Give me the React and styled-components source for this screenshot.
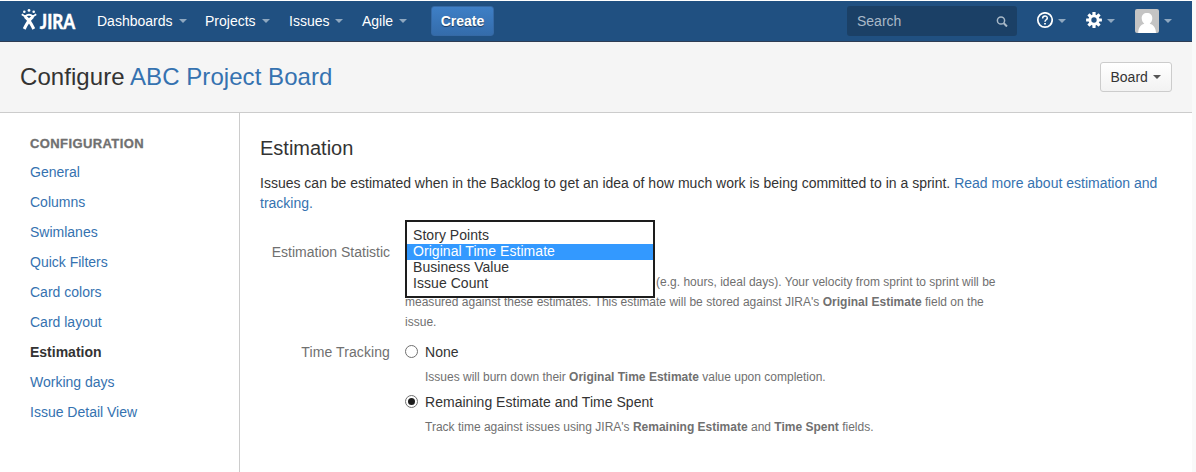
import React from "react";
import styled, { createGlobalStyle, css } from "styled-components";

const Global = createGlobalStyle`
  * { box-sizing: border-box; }
  html, body { margin: 0; padding: 0; background: #f9f9f9; }
  body { font-family: "Liberation Sans", Arial, sans-serif; font-size: 14px; line-height: 20px; color: #333; }
`;
const Page = styled.div`
  width: 1192px; height: 472px; padding-top: 1px; overflow: hidden;
  background: #fff; display: flex; flex-direction: column;
`;
const TopBar = styled.header`
  height: 41px; flex: none; background: #205081; border-bottom: 1px solid #2e3d54;
  display: flex; align-items: center; padding: 0 20px;
`;
const Logo = styled.svg`
  display: block; width: 60px; height: 40px; flex: none; margin-right: 17px; overflow: visible;
`;
const Caret = styled.span`
  display: block; flex: none; width: 0; height: 0;
  border: 4px solid transparent; border-bottom-width: 0;
  border-top-color: ${(p) => p.$color || "#8fa8c0"};
`;
const NavItem = styled.a`
  display: flex; align-items: center; gap: 6px; color: #fff;
  width: ${(p) => p.$width}px;
`;
const CreateButton = styled.button`
  width: 63px; height: 30px; padding: 0; border: 1px solid #3569a5; border-radius: 3px;
  background: linear-gradient(#3e7fc6, #346cab); color: #fff;
  font: bold 14px "Liberation Sans", Arial, sans-serif; text-shadow: 0 1px 1px rgba(0,0,0,.5);
`;
const Tools = styled.div`
  margin-left: auto; display: flex; align-items: center;
`;
const Search = styled.div`
  width: 170px; height: 30px; border-radius: 3px; background: #1b4066; color: #a9b9c8;
  display: flex; align-items: center; justify-content: space-between;
  padding: 0 9px 0 10px; margin-right: 19px;
`;
const Tool = styled.div`
  display: flex; align-items: center; gap: 5px; margin-right: ${(p) => p.$after || 0}px;
  svg { display: block; }
`;
const PageHead = styled.div`
  height: 71px; flex: none; background: #f5f5f5; border-bottom: 1px solid #ccc;
  display: flex; align-items: center; justify-content: space-between; padding: 0 20px;
`;
const Title = styled.h1`
  margin: 0; font-size: 24px; font-weight: normal; line-height: 30px; letter-spacing: 0.06px;
`;
const Link = styled.a`
  color: #3572b0;
`;
const BoardButton = styled.button`
  width: 72px; height: 30px; border: 1px solid #ccc; border-radius: 3px; padding: 0 0 0 9.5px;
  background: linear-gradient(#fff, #f2f2f2); color: #333; font: 14px "Liberation Sans", Arial, sans-serif;
  display: flex; align-items: center; gap: 5px;
`;
const Body = styled.div`
  flex: 1; display: flex;
`;
const Sidebar = styled.nav`
  width: 240px; flex: none; border-right: 1px solid #ccc; padding: 21px 0 0 30px;
`;
const SideHeading = styled.h2`
  margin: 0; padding-bottom: 3px; font-size: 13px; line-height: 20px; color: #707070;
  letter-spacing: 0.4px; -webkit-text-stroke: 0.3px #707070;
`;
const SideLink = styled.a`
  display: block; height: 30px; line-height: 30px; color: #3572b0;
  ${(p) => p.$active && css`color: #333; font-weight: bold;`}
`;
const Content = styled.main`
  width: 920px; padding: 20px 0 0 20px;
`;
const SectionTitle = styled.h2`
  margin: 0; font-size: 20px; font-weight: normal; line-height: 30px;
`;
const Intro = styled.p`
  margin: 10px 0 0;
`;
const Field = styled.div`
  display: grid; grid-template-columns: 130px 600px; column-gap: 15px;
  margin-top: ${(p) => p.$top}px;
`;
const Label = styled.div`
  text-align: right; color: #707070; letter-spacing: ${(p) => p.$track || 0}px;
`;
const Control = styled.div`
  position: relative;
`;
const Menu = styled.ul`
  position: absolute; left: 0; top: -22px; width: 250px; height: 78px; margin: 0;
  padding: 6px 0 4px; list-style: none; background: #fff; border: 2px solid #1d1d1d;
`;
const Option = styled.li`
  height: 16px; line-height: 15px; padding-left: 6px; letter-spacing: 0.05px;
  ${(p) => p.$selected && css`background: #3399ff; color: #fff;`}
`;
const Hint = styled.p`
  margin: 0; font-size: 12px; line-height: 20px; color: #707070;
  padding-top: ${(p) => p.$top || 0}px; padding-left: ${(p) => p.$left || 0}px;
  text-indent: ${(p) => p.$indent || 0}px; letter-spacing: ${(p) => p.$track || 0}px;
`;
const Choice = styled.label`
  display: flex; align-items: center; height: 20px; gap: 7px; margin-top: ${(p) => p.$top || 0}px;
  letter-spacing: 0.03px;
`;
const Radio = styled.span`
  width: 13px; height: 13px; border: 1px solid #707070; border-radius: 50%; background: #fff;
  display: flex; align-items: center; justify-content: center; margin-bottom: 1px;
  ${(p) => p.$on && css`&::after { content: ""; width: 7px; height: 7px; border-radius: 50%; background: #1d1d1d; }`}
`;

const SIDE = ["General", "Columns", "Swimlanes", "Quick Filters", "Card colors", "Card layout", "Estimation", "Working days", "Issue Detail View"];
const OPTIONS = ["Story Points", "Original Time Estimate", "Business Value", "Issue Count"];
const NAV = [["Dashboards", 108], ["Projects", 84], ["Issues", 73], ["Agile", 69]];

export default function App() {
  return (
    <>
      <Global />
      <Page>
        <TopBar>
          <Logo viewBox="20 1 60 40" aria-label="JIRA">
            <g fill="#fff">
              <circle cx="24.3" cy="11.8" r="1.3" />
              <circle cx="29" cy="10.4" r="1.4" />
              <circle cx="33.7" cy="11.8" r="1.3" />
            </g>
            <g fill="none" stroke="#fff">
              <path d="M21.8 14.2L25 16.4Q29 13.2 33 16.4L36.2 14.2" strokeWidth="1.8" />
              <path d="M25 16.5C28.5 19.5 31.5 24 33.8 29" strokeWidth="3" />
              <path d="M33 16.5C29.500 19.5 26.500 24 24.2 29" strokeWidth="3" />
            </g>
            <text x="39.8" y="28.6" fill="#fff" stroke="#fff" strokeWidth=".3" fontFamily="Lato" fontWeight="900" fontSize="20" textLength="35.5" lengthAdjust="spacingAndGlyphs">JIRA</text>
          </Logo>
          {NAV.map(([t, w]) => (
            <NavItem key={t} $width={w}>{t}<Caret /></NavItem>
          ))}
          <CreateButton>Create</CreateButton>
          <Tools>
            <Search>
              Search
              <svg width="12" height="12" viewBox="0 0 12 12" fill="none" stroke="#a9b9c8">
                <circle cx="5" cy="5.5" r="3.6" strokeWidth="1.5" />
                <path d="M7.8 8.3L11 11.5" strokeWidth="2" />
              </svg>
            </Search>
            <Tool $after={20}>
              <svg width="17" height="18" viewBox="0 0 17 18" fill="none" stroke="#fff">
                <circle cx="9" cy="8" r="7.2" strokeWidth="1.7" />
                <path d="M6.6 6.4C6.7 3.2 11.4 3.3 11.3 6.100C11.2 7.8 9 7.800 9 9.7" strokeWidth="1.5" />
                <path d="M9 10.9V12.6" strokeWidth="1.8" />
              </svg>
              <Caret />
            </Tool>
            <Tool $after={20}>
              <svg width="16" height="18" viewBox="-8 -8 16 18">
                <g fill="#fff">
                  {[0, 45, 90, 135].map((a) => (
                    <rect key={a} x="-1.6" y="-7.9" width="3.2" height="15.8" rx=".4" transform={`rotate(${a})`} />
                  ))}
                  <circle r="5.5" />
                </g>
                <circle r="2.7" fill="#205081" />
              </svg>
              <Caret />
            </Tool>
            <Tool>
              <svg width="24" height="24" viewBox="0 0 24 24">
                <rect width="24" height="24" rx="2" fill="#c4c4c4" />
                <path d="M12 4C8.8 4 6.5 6 6.7 9.5C6.900 12 8 13.7 9.3 14.8C5.5 15.8 3.5 18.5 3.2 24H21C20.7 18.5 18.5 15.8 14.7 14.8C16 13.7 17.1 12 17.3 9.5C17.5 6 15.2 4 12 4Z" fill="#fff" />
              </svg>
              <Caret />
            </Tool>
          </Tools>
        </TopBar>
        <PageHead>
          <Title>Configure <Link>ABC Project Board</Link></Title>
          <BoardButton>Board<Caret $color="#555" /></BoardButton>
        </PageHead>
        <Body>
          <Sidebar>
            <SideHeading>CONFIGURATION</SideHeading>
            {SIDE.map((t) => <SideLink key={t} $active={t === "Estimation"}>{t}</SideLink>)}
          </Sidebar>
          <Content>
            <SectionTitle>Estimation</SectionTitle>
            <Intro>
              Issues can be estimated when in the Backlog to get an idea of how much work is being committed to in a sprint. <Link>Read more about estimation and tracking.</Link>
            </Intro>
            <Field $top={29}>
              <Label>Estimation Statistic</Label>
              <Control>
                <Hint $top={30} $indent={251} $track={0.01}>
                  (e.g. hours, ideal days). Your velocity from sprint to sprint will be measured against these estimates. This estimate will be stored against JIRA's <b>Original Estimate</b> field on the issue.
                </Hint>
                <Menu>
                  {OPTIONS.map((t, i) => <Option key={t} $selected={i === 1}>{t}</Option>)}
                </Menu>
              </Control>
            </Field>
            <Field $top={10}>
              <Label $track={0.1}>Time Tracking</Label>
              <Control>
                <Choice><Radio />None</Choice>
                <Hint $top={5} $left={20}>Issues will burn down their <b>Original Time Estimate</b> value upon completion.</Hint>
                <Choice $top={5}><Radio $on />Remaining Estimate and Time Spent</Choice>
                <Hint $top={5} $left={20}>Track time against issues using JIRA's <b>Remaining Estimate</b> and <b>Time Spent</b> fields.</Hint>
              </Control>
            </Field>
          </Content>
        </Body>
      </Page>
    </>
  );
}
